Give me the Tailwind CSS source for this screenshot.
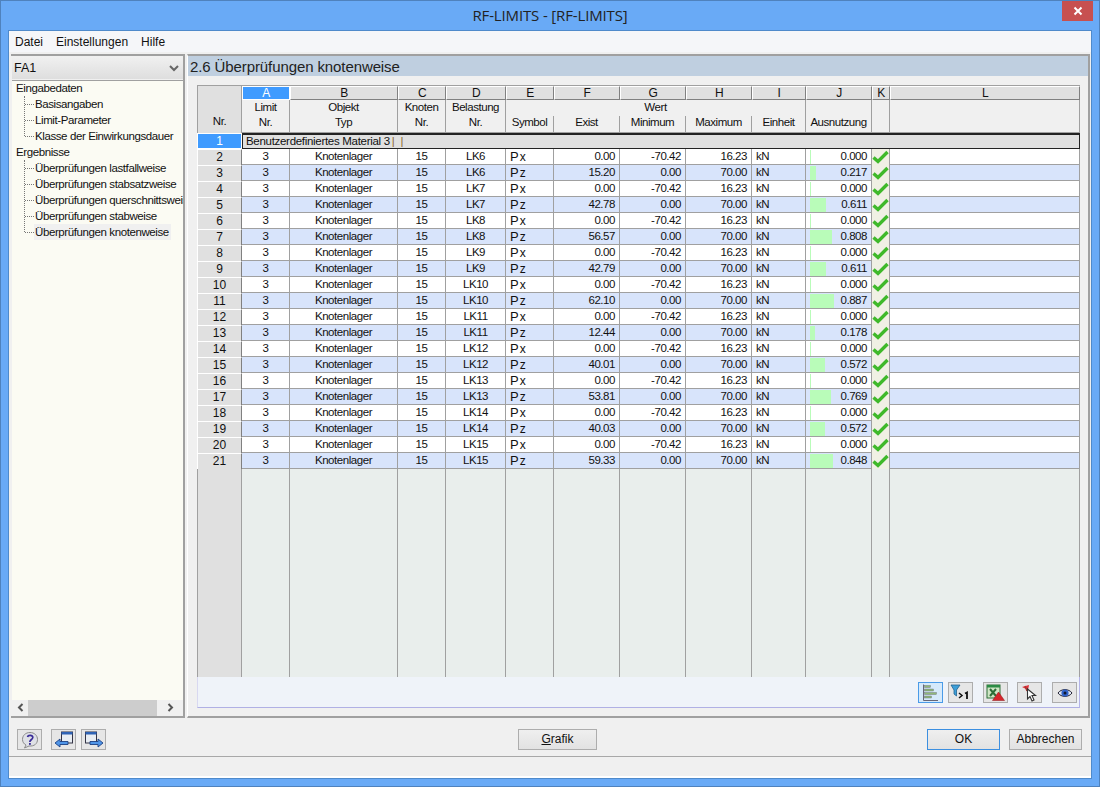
<!DOCTYPE html>
<html lang="de">
<head>
<meta charset="UTF-8">
<title>RF-LIMITS</title>
<script src="https://cdn.jsdelivr.net/npm/@tailwindcss/browser@4"></script>
</head>
<body class="m-0 overflow-hidden bg-white">
<div class="w-[1100px] h-[787px] flex flex-col bg-[#69aaf6] border border-[#4f82bd] px-[7px] pb-[7px] font-['Liberation_Sans',sans-serif] text-[12px] text-[#111]">
  <!-- title bar -->
  <div class="h-[29px] shrink-0 flex relative">
    <div class="flex-1 text-center pt-[3px] text-[15px] text-[#222] font-['Open_Sans',sans-serif] tracking-[-0.15px]">RF-LIMITS - [RF-LIMITS]</div>
    <div class="absolute right-[-1px] top-0 w-[31px] h-[20px] bg-[#c75050] flex items-center justify-center">
      <svg width="10" height="10" viewBox="0 0 10 10"><path d="M1.5 1.5L8.5 8.5M8.5 1.5L1.5 8.5" stroke="#fff" stroke-width="2"/></svg>
    </div>
  </div>

  <div class="flex-1 flex flex-col border border-[#4f8acb] bg-[#f0f0f0] min-h-0">
    <!-- menu -->
    <div class="h-[21px] shrink-0 bg-[#f5f6f9] flex items-center gap-[13px] pl-[6px]">
      <span>Datei</span><span>Einstellungen</span><span>Hilfe</span>
    </div>

    <div class="h-[666px] shrink-0 flex pl-[2px] pt-[2px] gap-[2px]">
      <!-- left nav -->
      <div class="w-[174px] flex flex-col border-t-2 border-r-2 border-b-2 border-[#a0a0a0] pl-[1px] overflow-hidden">
        <div class="h-[22px] mt-[1px] bg-gradient-to-b from-[#f0f0f0] to-[#dedede] flex items-center justify-between pl-[2px] pr-[4px] text-[12.5px]">
          <span>FA1</span>
          <svg width="10" height="7" viewBox="0 0 10 7"><path d="M1 1L5 5L9 1" fill="none" stroke="#666" stroke-width="2"/></svg>
        </div>
        <div class="flex-1 mt-[1px] bg-[#fbfbf3] border-t border-[#a0a0a0] flex flex-col pl-[4px] min-h-0 text-[11.5px] tracking-[-0.4px] whitespace-nowrap">
          <div class="h-[15px] leading-[14px]">Eingabedaten</div>
          <div class="ml-[8px] flex">
            <div class="w-px h-[40px] border-l border-dotted border-[#777]"></div>
            <div class="flex flex-col">
              <div class="h-[16px] leading-[16px] flex items-center"><span class="w-[9px] shrink-0 border-t border-dotted border-[#777]"></span><span class="pl-[1px]">Basisangaben</span></div>
              <div class="h-[16px] leading-[16px] flex items-center"><span class="w-[9px] shrink-0 border-t border-dotted border-[#777]"></span><span class="pl-[1px]">Limit-Parameter</span></div>
              <div class="h-[16px] leading-[16px] flex items-center"><span class="w-[9px] shrink-0 border-t border-dotted border-[#777]"></span><span class="pl-[1px]">Klasse der Einwirkungsdauer</span></div>
            </div>
          </div>
          <div class="h-[16px] leading-[16px]">Ergebnisse</div>
          <div class="ml-[8px] flex">
            <div class="w-px h-[72px] border-l border-dotted border-[#777]"></div>
            <div class="flex flex-col w-[158px] overflow-hidden">
              <div class="h-[16px] leading-[16px] flex items-center"><span class="w-[9px] shrink-0 border-t border-dotted border-[#777]"></span><span class="pl-[1px]">Überprüfungen lastfallweise</span></div>
              <div class="h-[16px] leading-[16px] flex items-center"><span class="w-[9px] shrink-0 border-t border-dotted border-[#777]"></span><span class="pl-[1px]">Überprüfungen stabsatzweise</span></div>
              <div class="h-[16px] leading-[16px] flex items-center"><span class="w-[9px] shrink-0 border-t border-dotted border-[#777]"></span><span class="pl-[1px]">Überprüfungen querschnittsweise</span></div>
              <div class="h-[16px] leading-[16px] flex items-center"><span class="w-[9px] shrink-0 border-t border-dotted border-[#777]"></span><span class="pl-[1px]">Überprüfungen stabweise</span></div>
              <div class="h-[16px] leading-[16px] flex items-center"><span class="w-[9px] shrink-0 border-t border-dotted border-[#777]"></span><span class="pl-[1px] pr-[2px] bg-[#f0f0f0]">Überprüfungen knotenweise</span></div>
            </div>
          </div>
          <div class="flex-1"></div>
        </div>
        <!-- scrollbar -->
        <div class="h-[17px] bg-[#fbfbf3] flex items-center">
          <div class="w-[16px] h-[16px] bg-[#f0f0f0] flex items-center justify-center"><svg width="7" height="9" viewBox="0 0 7 9"><path d="M5.5 1L2 4.5L5.5 8" fill="none" stroke="#555" stroke-width="2"/></svg></div>
          <div class="w-[129px] h-[16px] bg-[#cdcdcd]"></div>
          <div class="flex-1 h-[16px] bg-[#f0f0f0] flex items-center justify-center"><svg width="7" height="9" viewBox="0 0 7 9"><path d="M1.5 1L5 4.5L1.5 8" fill="none" stroke="#555" stroke-width="2"/></svg></div>
        </div>
      </div>

      <!-- right panel -->
      <div class="w-[903px] flex flex-col border-t-2 border-l border-b-2 border-r-2 border-[#a0a0a0] border-l-white">
        <div class="h-[20px] bg-[#bfcfe0] text-[15px] leading-[21px] pl-[2px] tracking-[-0.1px] text-[#222]">2.6 Überprüfungen knotenweise</div>
        <div class="ml-[9px] mt-[9px] w-[883px] border-t border-[#a0a0a0]" id="table">
          <div class="grid grid-cols-[45px_48px_108px_48px_60px_48px_66px_66px_66px_54px_66px_18px_190px] grid-rows-[14px_16px_17px] bg-[#f0f0f0] text-[11.5px] tracking-[-0.45px] text-center leading-[12px]">
            <div class="row-span-3 bg-[#e0e0e0] border-l border-r border-[#a0a0a0] flex items-end justify-center pb-[6px]">Nr.</div>
            <div class="bg-[#3f9bff] text-white border border-white leading-[12px] text-[12px]">A</div>
            <div class="bg-[#e0e0e0] border-t border-l border-white border-r border-r-[#808080] border-b border-b-[#808080] leading-[12px] text-[12px]">B</div>
            <div class="bg-[#e0e0e0] border-t border-l border-white border-r border-r-[#808080] border-b border-b-[#808080] leading-[12px] text-[12px]">C</div>
            <div class="bg-[#e0e0e0] border-t border-l border-white border-r border-r-[#808080] border-b border-b-[#808080] leading-[12px] text-[12px]">D</div>
            <div class="bg-[#e0e0e0] border-t border-l border-white border-r border-r-[#808080] border-b border-b-[#808080] leading-[12px] text-[12px]">E</div>
            <div class="bg-[#e0e0e0] border-t border-l border-white border-r border-r-[#808080] border-b border-b-[#808080] leading-[12px] text-[12px]">F</div>
            <div class="bg-[#e0e0e0] border-t border-l border-white border-r border-r-[#808080] border-b border-b-[#808080] leading-[12px] text-[12px]">G</div>
            <div class="bg-[#e0e0e0] border-t border-l border-white border-r border-r-[#808080] border-b border-b-[#808080] leading-[12px] text-[12px]">H</div>
            <div class="bg-[#e0e0e0] border-t border-l border-white border-r border-r-[#808080] border-b border-b-[#808080] leading-[12px] text-[12px]">I</div>
            <div class="bg-[#e0e0e0] border-t border-l border-white border-r border-r-[#808080] border-b border-b-[#808080] leading-[12px] text-[12px]">J</div>
            <div class="bg-[#e0e0e0] border-t border-l border-white border-r border-r-[#808080] border-b border-b-[#808080] leading-[12px] text-[12px]">K</div>
            <div class="bg-[#e0e0e0] border-t border-l border-white border-r border-r-[#808080] border-b border-b-[#808080] leading-[12px] text-[12px]">L</div>

            <div class="border-r border-[#a0a0a0] leading-[14px]">Limit</div>
            <div class="border-r border-[#a0a0a0] leading-[14px]">Objekt</div>
            <div class="border-r border-[#a0a0a0] leading-[14px]">Knoten</div>
            <div class="border-r border-[#a0a0a0] leading-[14px]">Belastung</div>
            <div class="col-span-5 border-r border-[#a0a0a0] leading-[14px]">Wert</div>
            <div class="border-r border-[#a0a0a0]"></div>
            <div class="border-r border-[#a0a0a0]"></div>
            <div class="border-r border-[#a0a0a0]"></div>

            <div class="border-r border-[#a0a0a0] border-b">Nr.</div>
            <div class="border-r border-[#a0a0a0] border-b">Typ</div>
            <div class="border-r border-[#a0a0a0] border-b">Nr.</div>
            <div class="border-r border-[#a0a0a0] border-b">Nr.</div>
            <div class="border-r border-[#a0a0a0] border-b">Symbol</div>
            <div class="border-r border-[#a0a0a0] border-b">Exist</div>
            <div class="border-r border-[#a0a0a0] border-b">Minimum</div>
            <div class="border-r border-[#a0a0a0] border-b">Maximum</div>
            <div class="border-r border-[#a0a0a0] border-b">Einheit</div>
            <div class="border-r border-[#a0a0a0] border-b">Ausnutzung</div>
            <div class="border-r border-[#a0a0a0] border-b"></div>
            <div class="border-r border-[#a0a0a0] border-b"></div>
          </div>

          <div class="flex h-[16px]">
            <div class="w-[45px] bg-[#3f9bff] text-white text-center leading-[14px] border border-white">1</div>
            <div class="w-[838px] bg-[#e0e0e0] border border-[#222] border-t-2 leading-[13px] pl-[3px] text-[11.5px] tracking-[-0.3px]">Benutzerdefiniertes Material 3<span class="text-[#8a6a30] ml-[2px]">|</span><span class="text-[#8a6a30] ml-[6px]">|</span></div>
          </div>

          <div id="rows"></div>

          <div class="grid grid-cols-[45px_48px_108px_48px_60px_48px_66px_66px_66px_54px_66px_18px_190px] h-[208px] bg-[#e9eeec]">
            <div class="bg-[#e0e0e0] border-l border-r border-[#a0a0a0]"></div>
            <div class="border-r border-[#a0a0a0]"></div>
            <div class="border-r border-[#a0a0a0]"></div>
            <div class="border-r border-[#a0a0a0]"></div>
            <div class="border-r border-[#a0a0a0]"></div>
            <div class="border-r border-[#a0a0a0]"></div>
            <div class="border-r border-[#a0a0a0]"></div>
            <div class="border-r border-[#a0a0a0]"></div>
            <div class="border-r border-[#a0a0a0]"></div>
            <div class="border-r border-[#a0a0a0]"></div>
            <div class="border-r border-[#a0a0a0]"></div>
            <div class="border-r border-[#a0a0a0]"></div>
            <div class="border-r border-[#a0a0a0]"></div>
          </div>

          <!-- grid toolbar -->
          <div class="h-[31px] bg-[#eff3f9] border-l border-b border-r border-l-[#d8d8f0] border-r-[#b4b4e8] border-b-[#b0b0e4] flex items-start pt-[5px] pl-[720px]">
            <div class="w-[25px] h-[21px] border border-[#4a9be8] bg-[#d5e9fb] flex items-center justify-center">
              <svg width="17" height="17" viewBox="0 0 17 17"><path d="M1.5 0.5V16.5H16" fill="none" stroke="#667" stroke-width="1"/><rect x="2.5" y="1.5" width="6" height="2" fill="#8fb878" stroke="#667" stroke-width="0.4"/><rect x="2.5" y="5" width="9" height="2" fill="#8fb878" stroke="#667" stroke-width="0.4"/><rect x="2.5" y="8.5" width="12" height="2" fill="#8fb878" stroke="#667" stroke-width="0.4"/><rect x="2.5" y="12" width="7" height="2" fill="#8fb878" stroke="#667" stroke-width="0.4"/></svg>
            </div>
            <div class="ml-[5px] w-[25px] h-[21px] border border-[#adadad] bg-[#e6e6e6] flex items-center justify-center">
              <svg width="21" height="17" viewBox="0 0 21 17"><path d="M1 1H10L6.5 6V12L4 10V6Z" fill="#3d9fd8" stroke="#23628f" stroke-width="0.8"/><path d="M9 9L12 11.5L9 14" fill="none" stroke="#111" stroke-width="1.5"/><path d="M15 9.5L17 8.5V15" fill="none" stroke="#111" stroke-width="1.8"/></svg>
            </div>
            <div class="ml-[10px] w-[25px] h-[21px] border border-[#adadad] bg-[#e6e6e6] flex items-center justify-center">
              <svg width="19" height="17" viewBox="0 0 19 17"><rect x="1" y="1" width="13" height="13" fill="#cfe5c4" stroke="#2c6e37"/><rect x="1" y="1" width="13" height="2.5" fill="#2c8c45"/><path d="M4 5L10 12M10 5L4 12" stroke="#2c6e37" stroke-width="2"/><path d="M12.5 8L18.5 16.5H6.5Z" fill="#d6262b" stroke="#8e1518" stroke-width="0.5"/></svg>
            </div>
            <div class="ml-[9px] w-[25px] h-[21px] border border-[#adadad] bg-[#e6e6e6] flex items-center justify-center">
              <svg width="17" height="18" viewBox="0 0 17 18"><path d="M1 3L8 1L7 6Z" fill="#e0333a"/><path d="M4 2L6 7" stroke="#a33" stroke-width="1.4"/><path d="M6.5 5V15L9 12.5L11 17L13 16L11 11.5H14.5Z" fill="#fff" stroke="#333" stroke-width="1.1"/></svg>
            </div>
            <div class="ml-[10px] w-[25px] h-[21px] border border-[#adadad] bg-[#e6e6e6] flex items-center justify-center">
              <svg width="16" height="12" viewBox="0 0 16 12"><path d="M1 6C4 1.5 12 1.5 15 6C12 10.5 4 10.5 1 6Z" fill="#dfe6f2" stroke="#223" stroke-width="1"/><circle cx="8" cy="6" r="3.6" fill="#2f62c9"/><circle cx="8" cy="6" r="1.5" fill="#101830"/></svg>
            </div>
          </div>
        </div>
      </div>
    </div>

    <!-- bottom buttons -->
    <div class="h-[39px] shrink-0 flex items-start pt-[11px] pl-[8px] border-b border-[#a8a8a8]">
      <div class="w-[25px] h-[21px] border border-[#adadad] bg-[#e6e6e6] flex items-center justify-center">
        <svg width="18" height="18" viewBox="0 0 18 18"><path d="M9 1.5C4.5 1.5 1.5 4.5 1.5 8.5C1.5 11 3 13 5 14L3.5 17L8 15C13.5 15.5 16.5 12.5 16.5 8.5C16.5 4.5 13.5 1.5 9 1.5Z" fill="#dfe1e6" stroke="#8b8b8b"/><path d="M6.5 6C7 3.8 12 3.8 11.8 6.5C11.6 8.5 9 8.5 8.8 11" fill="none" stroke="#3a2c98" stroke-width="1.7"/><rect x="8" y="12" width="1.8" height="1.8" fill="#3a2c98"/></svg>
      </div>
      <div class="ml-[9px] w-[25px] h-[21px] border border-[#adadad] bg-[#e6e6e6] flex items-center justify-center">
        <svg width="20" height="18" viewBox="0 0 20 18"><rect x="7.5" y="1" width="11" height="11" fill="#e8edf3" stroke="#334"/><rect x="7.5" y="1" width="11" height="2.5" fill="#2f63b5"/><path d="M1 12L6 8V10.5H14V13.5H6V16Z" fill="#4f95e8" stroke="#1c3f82" stroke-width="0.9"/></svg>
      </div>
      <div class="ml-[5px] w-[25px] h-[21px] border border-[#adadad] bg-[#e6e6e6] flex items-center justify-center">
        <svg width="20" height="18" viewBox="0 0 20 18"><rect x="1.5" y="1" width="11" height="11" fill="#e8edf3" stroke="#334"/><rect x="1.5" y="1" width="11" height="2.5" fill="#2f63b5"/><path d="M19 12L14 8V10.5H6V13.5H14V16Z" fill="#4f95e8" stroke="#1c3f82" stroke-width="0.9"/></svg>
      </div>
      <div class="ml-[412px] w-[79px] h-[21px] border border-[#adadad] bg-gradient-to-b from-[#efefef] to-[#e2e2e2] text-center leading-[19px] text-[12px]"><span class="underline">G</span>rafik</div>
      <div class="ml-[330px] w-[73px] h-[21px] border border-[#3c8fe0] bg-gradient-to-b from-[#efefef] to-[#e2e2e2] text-center leading-[19px] text-[12px]">OK</div>
      <div class="ml-[9px] w-[73px] h-[21px] border border-[#adadad] bg-gradient-to-b from-[#efefef] to-[#e2e2e2] text-center leading-[19px] text-[12px]">Abbrechen</div>
    </div>
    <div class="flex-1 border-b-2 border-white"></div>
  </div>
</div>

<script>
  const gridCols = 'grid grid-cols-[45px_48px_108px_48px_60px_48px_66px_66px_66px_54px_66px_18px_190px] h-[16px] leading-[15px] text-[11.5px] tracking-[-0.45px] border-b border-[#a0a0a0]';
  const sep = 'border-r border-[#a0a0a0]';
  const data = [
    ['LK6','x','0.00','-70.42','16.23','0.000'],
    ['LK6','z','15.20','0.00','70.00','0.217'],
    ['LK7','x','0.00','-70.42','16.23','0.000'],
    ['LK7','z','42.78','0.00','70.00','0.611'],
    ['LK8','x','0.00','-70.42','16.23','0.000'],
    ['LK8','z','56.57','0.00','70.00','0.808'],
    ['LK9','x','0.00','-70.42','16.23','0.000'],
    ['LK9','z','42.79','0.00','70.00','0.611'],
    ['LK10','x','0.00','-70.42','16.23','0.000'],
    ['LK10','z','62.10','0.00','70.00','0.887'],
    ['LK11','x','0.00','-70.42','16.23','0.000'],
    ['LK11','z','12.44','0.00','70.00','0.178'],
    ['LK12','x','0.00','-70.42','16.23','0.000'],
    ['LK12','z','40.01','0.00','70.00','0.572'],
    ['LK13','x','0.00','-70.42','16.23','0.000'],
    ['LK13','z','53.81','0.00','70.00','0.769'],
    ['LK14','x','0.00','-70.42','16.23','0.000'],
    ['LK14','z','40.03','0.00','70.00','0.572'],
    ['LK15','x','0.00','-70.42','16.23','0.000'],
    ['LK15','z','59.33','0.00','70.00','0.848']
  ];
  const check = '<svg width="17" height="14" viewBox="0 0 17 14"><path d="M1.5 7.5L6 11.5L15.5 2" fill="none" stroke="#3fb92a" stroke-width="3.4"/></svg>';
  document.getElementById('rows').innerHTML = data.map((r, i) => {
    const bg = i % 2 ? 'bg-[#d8e4fb]' : 'bg-white';
    const bar = Math.max(1, Math.round(parseFloat(r[5]) * 27));
    return `<div class="${gridCols} ${bg}">
      <div class="bg-[#e0e0e0] border-t border-l border-white border-r border-r-[#808080] text-center text-[12px] leading-[14px] tracking-normal">${i + 2}</div>
      <div class="${sep} text-center">3</div>
      <div class="${sep} text-center">Knotenlager</div>
      <div class="${sep} text-center">15</div>
      <div class="${sep} text-center">${r[0]}</div>
      <div class="${sep} pl-[4px] text-[13px] tracking-normal">P<span class="ml-[1px] text-[12px]">${r[1]}</span></div>
      <div class="${sep} text-right pr-[4px]">${r[2]}</div>
      <div class="${sep} text-right pr-[4px]">${r[3]}</div>
      <div class="${sep} text-right pr-[4px]">${r[4]}</div>
      <div class="${sep} pl-[4px]">kN</div>
      <div class="${sep} relative text-right pr-[4px]"><div class="absolute left-[4px] top-[1px] bottom-[1px] bg-[#b9fcb9]" style="width:${bar}px"></div><span class="relative">${r[5]}</span></div>
      <div class="${sep} bg-[#f0f0e4] flex items-center justify-center">${check}</div>
      <div class="${sep}"></div>
    </div>`;
  }).join('');
</script>
</body>
</html>
